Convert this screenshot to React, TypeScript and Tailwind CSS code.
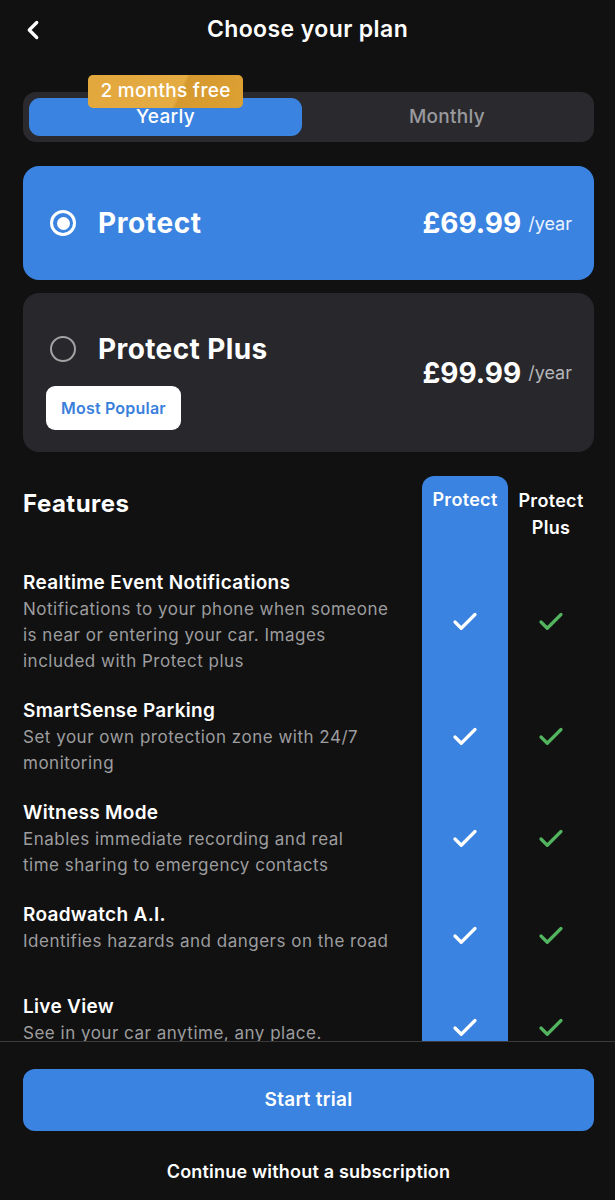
import { Check, ChevronLeft } from "lucide-react";

const font = { fontFamily: "Inter, 'Noto Sans', sans-serif" };

type Feature = { title: string; lines: string[] };

const features: Feature[] = [
  {
    title: "Realtime Event Notifications",
    lines: ["Notifications to your phone when someone", "is near or entering your car. Images", "included with Protect plus"],
  },
  { title: "SmartSense Parking", lines: ["Set your own protection zone with 24/7", "monitoring"] },
  { title: "Witness Mode", lines: ["Enables immediate recording and real", "time sharing to emergency contacts"] },
  { title: "Roadwatch A.I.", lines: ["Identifies hazards and dangers on the road"] },
  { title: "Live View", lines: ["See in your car anytime, any place."] },
];

function Radio({ selected }: { selected: boolean }) {
  if (selected) {
    return (
      <div className="w-[26px] h-[26px] rounded-full border-[3px] border-white flex items-center justify-center">
        <div className="w-[13px] h-[13px] rounded-full bg-white" />
      </div>
    );
  }
  return <div className="w-[26px] h-[26px] rounded-full border-[2.5px] border-[#a3a3a3]" />;
}

export default function App() {
  return (
    <div className="h-[1200px] w-full bg-[#111111] text-white flex flex-col overflow-hidden" style={font}>
      {/* Header */}
      <div className="relative h-[58px] flex items-center justify-center shrink-0">
        <ChevronLeft className="absolute left-[18px] top-[15px] w-[30px] h-[30px]" strokeWidth={2.6} />
        <div className="text-[23px] font-semibold tracking-[0.4px]">Choose your plan</div>
      </div>

      {/* Scroll area */}
      <div className="flex-1 overflow-hidden pl-[23px] pr-[21px] pt-[34px]">
        {/* Toggle */}
        <div className="relative h-[50px] rounded-[13px] bg-[#2a2a2e] flex items-center pl-[6px] pr-[6px]">
          <div className="w-[273px] h-[38px] rounded-[11px] bg-[#3a83e1] flex items-center justify-center text-[19px] font-medium tracking-[0.3px]">
            Yearly
          </div>
          <div className="flex-1 text-center text-[19px] font-medium tracking-[0.3px] text-[#9a9a9e] pl-[4px]">Monthly</div>
          <div className="absolute left-[65px] top-[-17px] h-[33px] w-[155px] rounded-[5px] bg-[linear-gradient(115deg,#e2a73c_0%,#e5ac44_58%,#d6992f_60%,#dca033_100%)] flex items-center justify-center text-[19px] font-medium tracking-[0.3px]">
            2 months free
          </div>
        </div>

        {/* Plans */}
        <div className="mt-[24px] h-[114px] rounded-[16px] bg-[#3a83e1] flex items-center pl-[27px] pr-[22px]">
          <Radio selected />
          <div className="ml-[22px] text-[28px] font-bold tracking-[0.6px] flex-1">Protect</div>
          <div className="text-[28px] font-bold">£69.99</div>
          <div className="ml-[7px] text-[18px] text-white/90">/year</div>
        </div>

        <div className="mt-[13px] h-[159px] rounded-[16px] bg-[#28282c] flex items-center pl-[23px] pr-[22px]">
          <div className="flex-1 flex flex-col pt-[12px]">
            <div className="flex items-center pl-[4px]">
              <Radio selected={false} />
              <div className="ml-[22px] text-[28px] font-bold tracking-[0.4px]">Protect Plus</div>
            </div>
            <div className="mt-[16px] self-start h-[44px] px-[15px] rounded-[9px] bg-white flex items-center text-[16px] font-semibold tracking-[0.2px] text-[#3a7fdc]">
              Most Popular
            </div>
          </div>
          <div className="text-[28px] font-bold">£99.99</div>
          <div className="ml-[7px] text-[18px] text-[#b5b5b8]">/year</div>
        </div>

        {/* Features */}
        <div className="mt-[24px] grid grid-cols-[1fr_86px_86px]">
          <div className="pt-[10px] pr-[22px] text-[24px] font-bold tracking-[0.5px] h-[82px]">Features</div>
          <div className="bg-[#3a83e1] rounded-t-[12px] pt-[11px] text-center text-[18px] font-semibold tracking-[0.3px] leading-[26px]">
            Protect
          </div>
          <div className="pt-[11px] text-center text-[18px] font-semibold tracking-[0.3px] leading-[27px]">
            Protect
            <br />
            Plus
          </div>

          {features.map((f) => (
            <Row key={f.title} f={f} />
          ))}
          <div className="h-[60px]" />
          <div className="h-[60px] bg-[#3a83e1]" />
          <div className="h-[60px]" />
        </div>
      </div>

      {/* Footer */}
      <div className="shrink-0 h-[159px] border-t border-[#3a3a3d] bg-[#111111] pl-[23px] pr-[21px] pt-[27px] flex flex-col items-center">
        <div className="w-full h-[62px] rounded-[12px] bg-[#3a83e1] flex items-center justify-center text-[19px] font-semibold tracking-[0.3px]">
          Start trial
        </div>
        <div className="mt-[27px] text-[18px] font-semibold tracking-[0.2px]">Continue without a subscription</div>
      </div>
    </div>
  );
}

function Row({ f }: { f: Feature }) {
  return (
    <>
      <div className="min-h-[92px] pt-[12px] pb-[12px] pr-[10px]">
        <div className="text-[19px] font-semibold tracking-[0.3px] leading-[26px]">{f.title}</div>
        {f.lines.map((l) => (
          <div key={l} className="text-[17px] tracking-[0.5px] leading-[26px] text-[#9d9d9f] whitespace-nowrap">
            {l}
          </div>
        ))}
      </div>
      <div className="bg-[#3a83e1] flex items-center justify-center">
        <Check className="w-[30px] h-[30px] text-white" strokeWidth={2.6} />
      </div>
      <div className="flex items-center justify-center">
        <Check className="w-[30px] h-[30px] text-[#52b45e]" strokeWidth={2.6} />
      </div>
    </>
  );
}
